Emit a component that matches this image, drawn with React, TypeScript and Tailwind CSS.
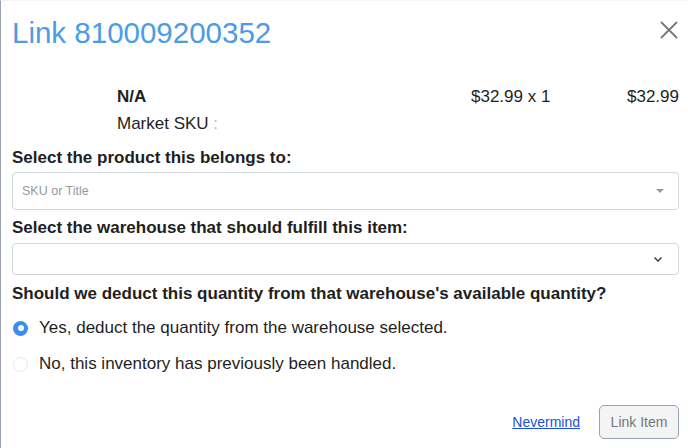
import React from 'react';

const App: React.FC = () => {
  return (
    <div
      className="w-[688px] h-[448px] bg-white border-l-[1.5px] border-l-gray-400 border-t border-t-gray-100 overflow-hidden text-[#1f1f1f]"
      style={{ fontFamily: '"Liberation Sans", Arial, sans-serif' }}
    >
      <div className="flex items-start justify-between pl-[11px] pr-[10px] pt-[15px]">
        <h1 className="text-[29.5px] leading-[34px] text-[#4a9be8]">Link 810009200352</h1>
        <button className="mt-[5px] text-[#777]">
          <svg width="18" height="18" viewBox="0 0 18 18" fill="none" stroke="currentColor" strokeWidth="1.8" strokeLinecap="round">
            <path d="M1.5 1.5 L16.5 16.5 M16.5 1.5 L1.5 16.5" />
          </svg>
        </button>
      </div>

      <div className="pl-[11px] pr-[9px] text-[17px] leading-[20px]">
        <div className="flex mt-[37px]">
          <div className="w-[105px]" />
          <div className="flex-1">
            <div className="font-bold">N/A</div>
            <div className="mt-[7px]">Market SKU <span className="text-[#bbb]">:</span></div>
          </div>
          <div className="w-[156px]">$32.99 x 1</div>
          <div>$32.99</div>
        </div>

        <div className="mt-[14px] font-bold">Select the product this belongs to:</div>
        <div className="mt-[4px] h-[38px] border border-gray-300 rounded-[4px] flex items-center justify-between pl-[9px] pr-[14px]">
          <span className="text-[12.5px] leading-[15px] text-[#999]">SKU or Title</span>
          <span className="w-0 h-0 border-l-[4px] border-r-[4px] border-t-[4px] border-l-transparent border-r-transparent border-t-[#999]" />
        </div>

        <div className="mt-[8px] font-bold">Select the warehouse that should fulfill this item:</div>
        <div className="mt-[5px] h-[32px] border border-gray-300 rounded-[4px] flex items-center justify-end pr-[14px]">
          <svg width="12" height="12" viewBox="0 0 12 12" fill="none" stroke="#333" strokeWidth="1.3">
            <path d="M2.5 4.5 L6 8 L9.5 4.5" />
          </svg>
        </div>

        <div className="mt-[9px] font-bold">Should we deduct this quantity from that warehouse's available quantity?</div>

        <div className="mt-[14px] flex items-center">
          <span className="w-[15px] h-[15px] rounded-full bg-[#3b8ef0] flex items-center justify-center ml-[1px]">
            <span className="w-[6px] h-[6px] rounded-full bg-white" />
          </span>
          <span className="ml-[11px]">Yes, deduct the quantity from the warehouse selected.</span>
        </div>
        <div className="mt-[16px] flex items-center">
          <span className="w-[15px] h-[15px] rounded-full border border-gray-200 bg-white ml-[1px]" />
          <span className="ml-[11px]">No, this inventory has previously been handled.</span>
        </div>

        <div className="mt-[31px] flex items-center justify-end">
          <a href="#" className="text-[14px] leading-[17px] text-[#1a4fd6] underline">Nevermind</a>
          <button className="ml-[19px] w-[80px] h-[34px] bg-gray-100 border border-gray-400 rounded-[5px] text-[14px] leading-[17px] text-[#777]">
            Link Item
          </button>
        </div>
      </div>
    </div>
  );
};

export default App;
